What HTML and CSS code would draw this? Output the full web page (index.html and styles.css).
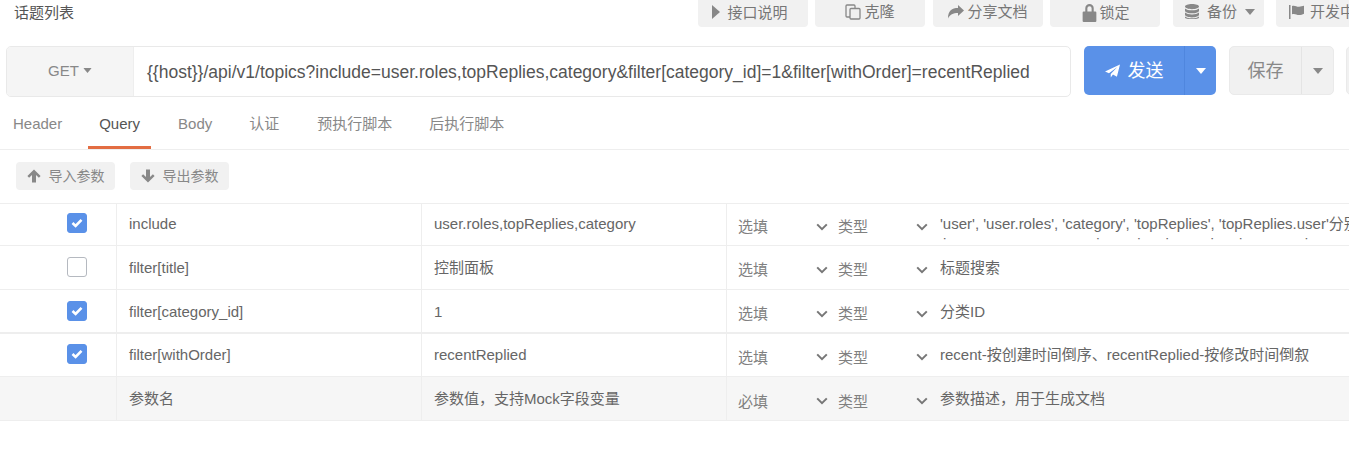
FILE: index.html
```html
<!DOCTYPE html>
<html lang="zh">
<head>
<meta charset="utf-8">
<title>话题列表</title>
<link rel="stylesheet" href="styles.css">
</head>
<body>
<svg class="defs" width="0" height="0" aria-hidden="true">
  <symbol id="chev" viewBox="0 0 12 8"><path d="M1.2 1.4 6 6.2l4.8-4.8" fill="none" stroke="currentColor" stroke-width="2"/></symbol>
  <symbol id="check" viewBox="0 0 12 10"><path d="M1.5 5 4.6 8 10.5 1.8" fill="none" stroke="#fff" stroke-width="2.6"/></symbol>
  <symbol id="caret" viewBox="0 0 10 6"><path d="M0 0h10L5 6z" fill="currentColor"/></symbol>
  <symbol id="up" viewBox="0 0 14 14"><path d="M7 .5 13.6 7l-1.7 1.8L9 6v7.5H5V6L2.100 8.800.4 7z" fill="currentColor"/></symbol>
  <symbol id="down" viewBox="0 0 14 14"><path d="M7 13.500.4 7l1.700-1.800L5 8V.5h4V8l2.900-2.800L13.600 7z" fill="currentColor"/></symbol>
</svg>

<header class="topbar">
  <div class="title">话题列表</div>
  <nav class="actions">
    <button class="act w110 doc"><svg class="ic" width="8" height="14" viewBox="0 0 8 14"><path d="M0 0 8 7 0 14z" fill="currentColor"/></svg><span class="low">接口说明</span></button>
    <button class="act w110"><svg class="ic" width="16" height="16" viewBox="0 0 16 16"><path d="M4.500 13H2a1 1 0 0 1-1-1V2a1 1 0 0 1 1-1h7a1 1 0 0 1 1 1v2M6 4.500h8a1 1 0 0 1 1 1V14a1 1 0 0 1-1 1H6a1 1 0 0 1-1-1V5.500a1 1 0 0 1 1-1z" fill="none" stroke="currentColor" stroke-width="1.300"/></svg><span>克隆</span></button>
    <button class="act w110"><svg class="ic" width="16" height="14" viewBox="0 0 16 14"><path d="M16 5.500 10 0v3C4 3 0 5.500 0 13.500 2 9.500 5 8 10 8v3z" fill="currentColor"/></svg><span>分享文档</span></button>
    <button class="act w110 lock"><svg class="ic" width="15" height="19" viewBox="0 0 14 18"><path d="M3 8V5a4 4 0 0 1 8 0v3h1.500a1 1 0 0 1 1 1v8a1 1 0 0 1-1 1h-11a1 1 0 0 1-1-1V9a1 1 0 0 1 1-1zm2 0h4V5a2 2 0 0 0-4 0z" fill="currentColor"/></svg><span class="low">锁定</span></button>
    <button class="act w91"><svg class="ic" width="14" height="16" viewBox="0 0 14 16"><path d="M7 0c3.900 0 7 1.100 7 2.600S10.900 5.200 7 5.200 0 4 0 2.600 3.100 0 7 0zM0 4.400c1.500 1.300 4 1.900 7 1.900s5.500-.6 7-1.900v2.300C14 8.100 10.900 9.300 7 9.300S0 8.100 0 6.700zm0 4.100c1.500 1.300 4 1.900 7 1.900s5.500-.6 7-1.900v2.300c0 1.400-3.100 2.600-7 2.600s-7-1.200-7-2.600zm0 3.900c1.500 1.300 4 1.900 7 1.900s5.500-.6 7-1.900v1c0 1.400-3.100 1.600-7 1.600s-7-.2-7-1.600z" fill="currentColor"/></svg><span class="spaced">备份</span><svg class="tiny" width="10" height="6"><use href="#caret"/></svg></button>
    <button class="act dev"><svg class="ic" width="15" height="14" viewBox="0 0 15 14"><path d="M0 0h1.500v14H0zM3 1c3 -1 4.500 1 7 .8 2-.2 3.500-.6 5-1v8c-1.500.8-3 1.200-5 1.200-2.500 0-4-1.800-7-.8z" fill="currentColor"/></svg><span>开发中</span></button>
  </nav>
</header>

<section class="request">
  <div class="url">
    <div class="method"><span>GET</span><svg width="9" height="5" viewBox="0 0 10 6"><use href="#caret"/></svg></div>
    <div class="address">{{host}}/api/v1/topics?include=user.roles,topReplies,category&amp;filter[category_id]=1&amp;filter[withOrder]=recentReplied</div>
  </div>
  <div class="split send">
    <button class="main"><svg width="15" height="14" viewBox="0 0 17 15"><path d="M17 0 13.500 14 9 11.500 6.500 15V11L14 3 4.500 10 0 8z" fill="#fff"/></svg><span>发送</span></button>
    <button class="more"><svg width="10" height="6"><use href="#caret"/></svg></button>
  </div>
  <div class="split save">
    <button class="main"><span>保存</span></button>
    <button class="more"><svg width="10" height="6"><use href="#caret"/></svg></button>
  </div>
  <div class="stub"></div>
</section>

<nav class="tabs">
  <a class="tab">Header</a>
  <a class="tab on">Query</a>
  <a class="tab">Body</a>
  <a class="tab">认证</a>
  <a class="tab">预执行脚本</a>
  <a class="tab">后执行脚本</a>
</nav>

<div class="tools">
  <button class="tool"><svg width="14" height="14"><use href="#up"/></svg><span>导入参数</span></button>
  <button class="tool"><svg width="14" height="14"><use href="#down"/></svg><span>导出参数</span></button>
</div>

<div class="table">
  <div class="row r1">
    <div class="cell chk"><span class="box on"><svg width="12" height="10"><use href="#check"/></svg></span></div>
    <div class="cell">include</div>
    <div class="cell">user.roles,topReplies,category</div>
    <div class="cell sel"><span class="pick">选填</span><svg class="chev" width="12" height="8"><use href="#chev"/></svg><span class="pick">类型</span><svg class="chev" width="12" height="8"><use href="#chev"/></svg><div class="desc clip">'user', 'user.roles', 'category', 'topReplies', 'topReplies.user'分别<br><span class="ticks">i&nbsp;&nbsp;&nbsp;&nbsp;&nbsp;&nbsp;&nbsp;&nbsp;&nbsp;&nbsp;&nbsp;&nbsp;&nbsp;&nbsp;&nbsp;&nbsp;&nbsp;&nbsp;&nbsp;&nbsp;&nbsp;&nbsp;&nbsp;&nbsp;&nbsp;&nbsp;&nbsp;&nbsp;&nbsp;&nbsp;&nbsp;&nbsp;&nbsp;&nbsp;&nbsp;&nbsp;i&nbsp;&nbsp;&nbsp;&nbsp;&nbsp;&nbsp;&nbsp;&nbsp;&nbsp;i&nbsp;&nbsp;&nbsp;&nbsp;&nbsp;&nbsp;i&nbsp;&nbsp;&nbsp;&nbsp;&nbsp;&nbsp;&nbsp;&nbsp;&nbsp;&nbsp;i&nbsp;&nbsp;&nbsp;&nbsp;&nbsp;&nbsp;i&nbsp;&nbsp;&nbsp;&nbsp;&nbsp;&nbsp;&nbsp;&nbsp;&nbsp;&nbsp;&nbsp;&nbsp;&nbsp;&nbsp;&nbsp;i</span></div></div>
  </div>
  <div class="row">
    <div class="cell chk"><span class="box"></span></div>
    <div class="cell">filter[title]</div>
    <div class="cell">控制面板</div>
    <div class="cell sel"><span class="pick">选填</span><svg class="chev" width="12" height="8"><use href="#chev"/></svg><span class="pick">类型</span><svg class="chev" width="12" height="8"><use href="#chev"/></svg><div class="desc">标题搜索</div></div>
  </div>
  <div class="row thick">
    <div class="cell chk"><span class="box on"><svg width="12" height="10"><use href="#check"/></svg></span></div>
    <div class="cell">filter[category_id]</div>
    <div class="cell">1</div>
    <div class="cell sel"><span class="pick">选填</span><svg class="chev" width="12" height="8"><use href="#chev"/></svg><span class="pick">类型</span><svg class="chev" width="12" height="8"><use href="#chev"/></svg><div class="desc">分类ID</div></div>
  </div>
  <div class="row r4">
    <div class="cell chk"><span class="box on"><svg width="12" height="10"><use href="#check"/></svg></span></div>
    <div class="cell">filter[withOrder]</div>
    <div class="cell">recentReplied</div>
    <div class="cell sel"><span class="pick">选填</span><svg class="chev" width="12" height="8"><use href="#chev"/></svg><span class="pick">类型</span><svg class="chev" width="12" height="8"><use href="#chev"/></svg><div class="desc">recent-按创建时间倒序、recentReplied-按修改时间倒叙</div></div>
  </div>
  <div class="row blank">
    <div class="cell chk"></div>
    <div class="cell">参数名</div>
    <div class="cell">参数值，支持Mock字段变量</div>
    <div class="cell sel"><span class="pick">必填</span><svg class="chev" width="12" height="8"><use href="#chev"/></svg><span class="pick">类型</span><svg class="chev" width="12" height="8"><use href="#chev"/></svg><div class="desc">参数描述，用于生成文档</div></div>
  </div>
</div>
</body>
</html>
```
FILE: styles.css
```css
* { box-sizing: border-box; }
html, body { margin: 0; height: 472px; overflow: hidden; background: #fff; }
body { font: 15px/20px "Liberation Sans", "Noto Sans CJK SC", sans-serif; color: #666; }
button { font: inherit; color: inherit; border: 0; padding: 0; background: none; }
.defs { position: absolute; }

.topbar { display: flex; height: 27px; }
.title { flex: none; width: 698px; padding: 3px 0 0 14px; color: #555; }
.actions { display: flex; flex: none; gap: 7px; }
.act { flex: none; height: 27px; background: #f1f1f1; border-radius: 0 0 4px 4px; display: flex; align-items: center; justify-content: center; gap: 3px; color: #777; padding-bottom: 3px; white-space: nowrap; }
.act:nth-child(3) { margin-left: 1px; }
.w110 { width: 110px; }
.doc { gap: 7px; padding-right: 6px; }
.lock { gap: 2px; padding-left: 2px; }
.w91 { width: 91px; margin-left: 6px; padding-left: 3px; }
.dev { width: 90px; margin-left: 5px; justify-content: flex-start; padding-left: 13px; gap: 6px; }
.ic { flex: none; color: #888; }
.low { position: relative; top: 1px; }
.spaced { margin-left: 5px; }
.tiny { margin-left: 5px; color: #888; }

.request { display: flex; margin-top: 19px; padding-left: 6px; height: 51px; }
.url { flex: none; width: 1065px; display: flex; border: 1px solid #e9e9e9; border-radius: 5px; overflow: hidden; }
.method { width: 127px; flex: none; background: #f5f5f5; border-right: 1px solid #eee; display: flex; align-items: center; justify-content: center; gap: 4px; color: #888; padding-bottom: 2px; }
.method svg { color: #888; }
.address { padding-left: 13px; font-size: 17.5px; line-height: 50px; color: #555; white-space: nowrap; }
.split { display: flex; flex: none; border-radius: 5px; overflow: hidden; height: 49px; }
.send { width: 132px; margin-left: 13px; background: #5a91e8; color: #fff; }
.send .main { width: 100px; display: flex; align-items: center; justify-content: center; gap: 8px; font-size: 18px; }
.send .more { flex: 1; border-left: 1px solid #4f86de; padding-bottom: 3px; }
.save { width: 105px; margin-left: 13px; background: #f1f1f1; color: #888; border: 1px solid #eaeaea; }
.save .main { width: 71px; font-size: 18px; }
.save .more { flex: 1; border-left: 1px solid #e4e4e4; padding-bottom: 3px; }
.stub { flex: none; width: 20px; height: 49px; margin-left: 12px; background: #f1f1f1; border: 1px solid #eaeaea; border-radius: 5px 0 0 5px; }

.tabs { display: flex; gap: 15px; height: 53px; padding-left: 2px; border-bottom: 1px solid #eee; }
.tab { display: block; height: 52px; line-height: 54px; padding: 0 11px; color: #888; white-space: nowrap; }
.tab.on { color: #555; border-bottom: 3px solid #e36d42; }
.tab:nth-child(3), .tab:nth-child(5) { margin-left: 1px; }

.tools { display: flex; gap: 15px; padding: 12px 0 0 16px; height: 53px; }
.tool { height: 28px; width: 99px; background: #f1f1f1; border-radius: 4px; display: flex; align-items: center; justify-content: center; gap: 8px; color: #888; font-size: 14px; }

.table { border-top: 1px solid #eee; }
.row { display: grid; grid-template-columns: 117px 305px 305px 1fr; height: 44px; border-bottom: 1px solid #eee; }
.row.r1 { height: 42px; }
.row.r1 .cell:not(.sel):not(.chk) { padding-bottom: 2px; }
.row.r4 { height: 43px; }
.row.thick { border-bottom-width: 2px; }
.row.thick .cell { padding-top: 2px; }
.row.blank { background: #f6f6f6; }
.cell { padding-left: 12px; display: flex; align-items: center; border-right: 1px solid #eee; white-space: nowrap; min-width: 0; overflow: hidden; }
.cell:last-child { border-right: 0; }
.chk { padding: 0 0 2px 67px; }
.row.r1 .chk { padding-bottom: 4px; }
.box { width: 20px; height: 20px; border: 1px solid #b5b9c0; border-radius: 3px; background: #fff; display: flex; align-items: center; justify-content: center; }
.box.on { background: #5a91e8; border-color: #5a91e8; }
.sel { padding-left: 11px; }
.pick { width: 78px; flex: none; color: #808080; position: relative; top: 2px; }
.r4 .pick, .blank .pick { top: 3px; }
.chev { flex: none; margin: 4px 10px 0 0; color: #777; }
.desc { margin-left: 2px; color: #666; }
.clip { height: 26px; overflow: hidden; align-self: flex-start; margin-top: 10px; }
.ticks { padding-left: 3px; }
```
